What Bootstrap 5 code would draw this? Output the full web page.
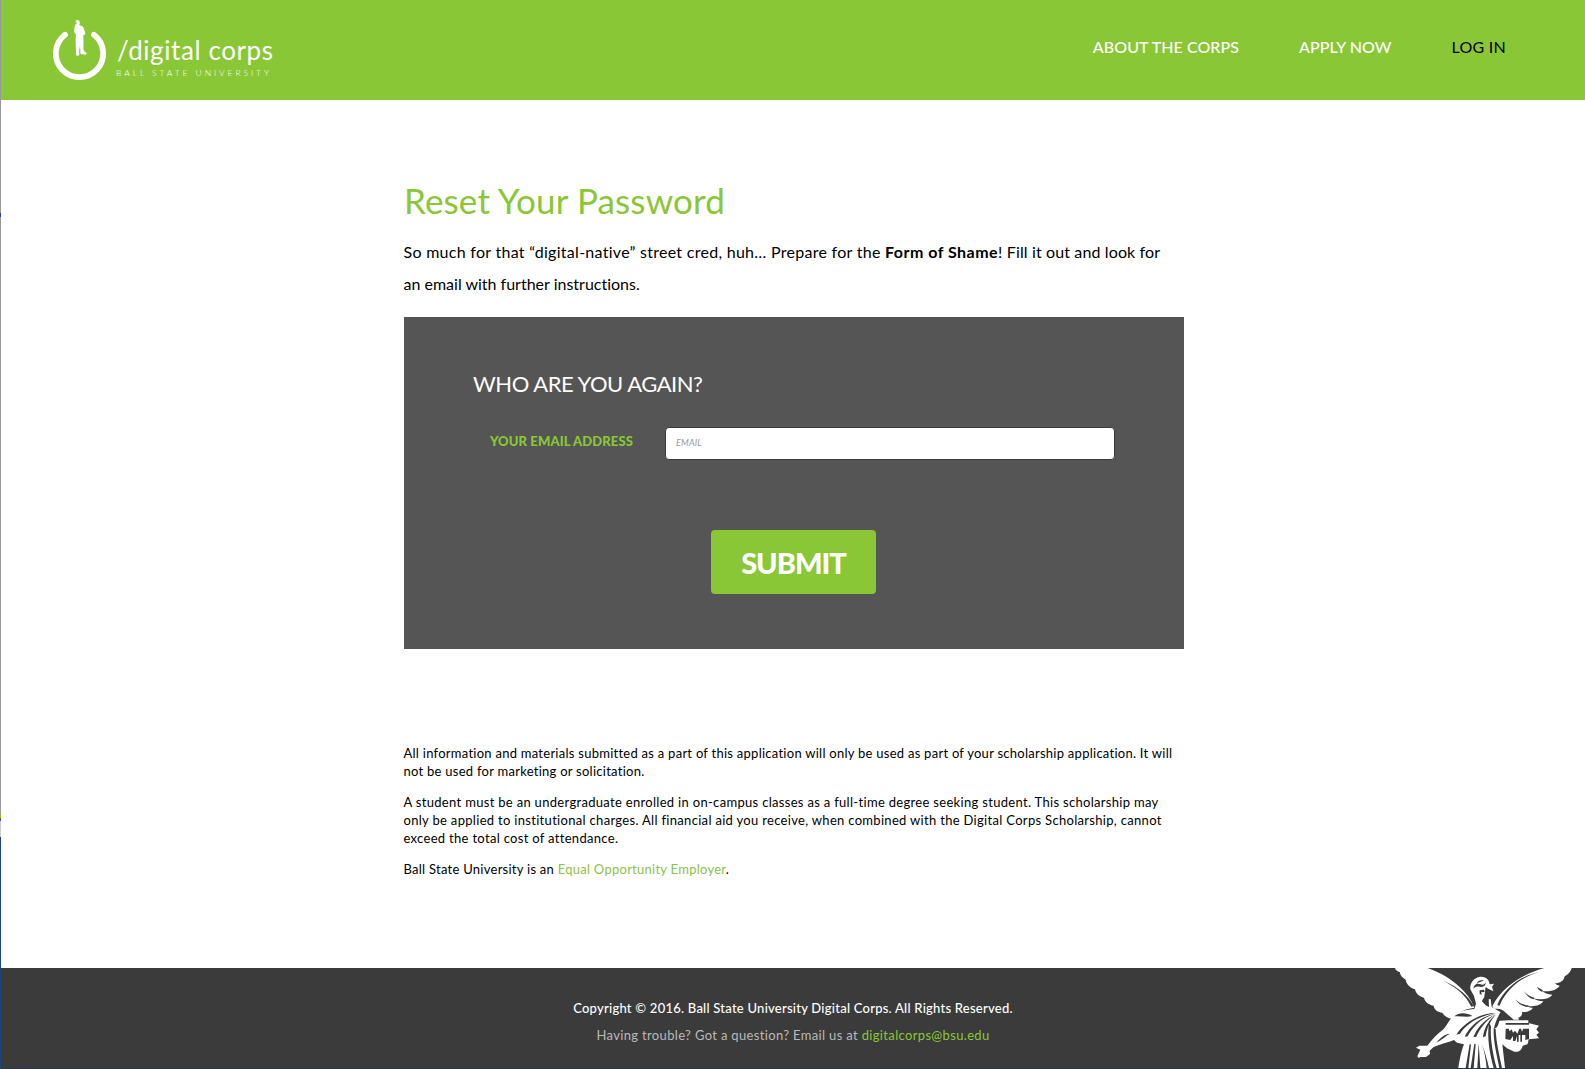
<!DOCTYPE html>
<html lang="en">
<head>
<meta charset="utf-8">
<meta name="viewport" content="width=device-width, initial-scale=1">
<title>Reset Your Password | Digital Corps</title>
<link href="https://cdn.jsdelivr.net/npm/bootstrap@5.3.0/dist/css/bootstrap.min.css" rel="stylesheet">
<style>
:root{--dc-green:#89c736}
body{font-family:Lato,"Open Sans",sans-serif;color:#000;background:#fff;font-variant-ligatures:none;min-height:1069px;overflow:hidden}
a{text-decoration:none}
.page-frame{display:grid;grid-template-columns:1px 1fr;height:1069px}
.edge-strip{background:linear-gradient(#999 0 213px,#234a80 213px 217px,#999 217px 815px,#c9a800 815px 818px,#345f95 818px 821px,#ccc 821px 837px,#1d447d 837px)}
.page-body{border-bottom:1px solid #24345a}
.site-header{background:var(--dc-green);height:100px;padding:0 79px 0 48px}
.site-nav{gap:60px;padding-top:35px;font-size:16px;line-height:24px;font-weight:500;letter-spacing:.06px}
.site-nav a{color:#fff;white-space:nowrap}
.site-nav a.login-link{color:#000;font-weight:400;letter-spacing:.25px}
.content-col{width:781px;margin-left:402px;padding:80px 0 0 1px}
.page-title{font-size:35px;line-height:40px;letter-spacing:.15px;color:var(--dc-green);margin:0 0 16px;font-weight:400}
.intro{font-size:16px;line-height:32px;white-space:nowrap;margin:0 0 17px -.5px}
.ls-a{letter-spacing:.28px}.ls-b{letter-spacing:.48px}.ls-c{letter-spacing:.13px}
.form-panel{background:#555;height:332px;padding:53px 69px 0}
.form-panel h2{font-size:22px;line-height:28px;letter-spacing:-.47px;color:#fff;font-weight:400;margin:0 0 29px}
.field-row{padding-left:17px}
.field-row label{width:175px;font-size:13px;line-height:18px;font-weight:900;letter-spacing:.12px;color:var(--dc-green);padding-top:5px}
.field-row .form-control{width:450px;height:33px;min-height:0;border:1px solid #3b3b3b;border-radius:4px;padding:0 10px 2px;font-size:9px;background:#fff}
.field-row .form-control::placeholder{font-style:italic;color:#999;opacity:1;letter-spacing:.15px}
.btn-send{width:165px;height:64px;margin:70px 0 0 238px;background:var(--dc-green);border:0;border-radius:4px;color:#fff;font-size:29px;font-weight:900;letter-spacing:-1px;line-height:64px;padding:1px 0 0}
.legal{font-size:13px;line-height:18px;letter-spacing:.26px;padding-top:95px;margin-left:-.5px;white-space:nowrap}
.legal p{margin-bottom:13px}
.legal .terms{letter-spacing:.31px}
.legal a{color:#8bc34a}
.site-footer{background:#3b3b3b;height:100px;padding-top:27px;font-size:13px;line-height:27px;letter-spacing:.24px;color:#fff}
.site-footer .copy-line{font-weight:500}
.site-footer .help-line{color:#b9b9b9;letter-spacing:.34px}
.site-footer .help-line a{color:var(--dc-green)}
.angel-mark{right:0;bottom:0}
</style>
</head>
<body>
<div class="page-frame">
<div class="edge-strip"></div>
<div class="page-body d-flex flex-column">
<header class="site-header d-flex justify-content-between align-items-start">
  <a href="#" aria-label="Digital Corps">
    <svg width="240" height="100" viewBox="49 0 240 100">
      <path d="M65 34.700A23.700 23.700 0 1 0 94 34.700" fill="none" stroke="#fff" stroke-width="5.800" stroke-linecap="round"/>
      <path d="M76.200 20.400c1.400-.8 3.200-.1 3.500 1.600.1 1.200 0 2.200-.4 3.100 1.400.7 2.800.9 3.700 1.700 1 1.700 1.400 3.800 2.100 5.800.4 1.200.1 1.700-.7 2.200l-1.100.6c.1 3.500.4 7.200.2 10.700-.2 1.500-.2 3 .3 4.500.9 1.300 2.400 1.800 2.900 2.700.1.900-.4 1.300-1.100 1.400-1.700.1-3.800-.2-5.100-.9-.3-1.500-.1-4.500-.5-7.500-.3 1.600-.7 2.500-.9 5.100.1 1.500.3 2.700.1 3.600-.3.900-2.800 1-3.300 0-.2-1 .1-2.200.1-3.300l-.4-10.600c0-2.300.1-4.700.3-6.900-1.500-1-1.800-2.300-1.700-3.700.2-2 .3-4.400 1-5.700.4-.6 1.200-.9 1.800-1.300-1.200-1.600-1.900-2.400-.8-3.100z" fill="#fff"/>
      <text x="117" y="60" font-size="26" fill="#fff" textLength="156" lengthAdjust="spacing">/digital corps</text>
      <text x="116" y="76" font-size="8.500" font-weight="300" fill="#fff" textLength="153">BALL STATE UNIVERSITY</text>
    </svg>
  </a>
  <nav class="site-nav d-flex">
    <a href="#">ABOUT THE CORPS</a>
    <a href="#">APPLY NOW</a>
    <a href="#" class="login-link">LOG IN</a>
  </nav>
</header>

<main class="content-col flex-grow-1">
  <h1 class="page-title">Reset Your Password</h1>
  <p class="intro"><span class="ls-a">So much for that “digital-native” street cred, huh… Prepare for the </span><strong class="ls-b">Form of Shame</strong><span class="ls-c">! Fill it out and look for</span><br>an email with further instructions.</p>
  <form class="form-panel">
    <h2>WHO ARE YOU AGAIN?</h2>
    <div class="field-row d-flex">
      <label for="email">YOUR EMAIL ADDRESS</label>
      <input id="email" type="email" class="form-control" placeholder="EMAIL">
    </div>
    <button type="button" class="btn btn-send d-block">SUBMIT</button>
  </form>
  <section class="legal">
    <p>All information and materials submitted as a part of this application will only be used as part of your scholarship application. It will<br>not be used for marketing or solicitation.</p>
    <p class="terms">A student must be an undergraduate enrolled in on-campus classes as a full-time degree seeking student. This scholarship may<br>only be applied to institutional charges. All financial aid you receive, when combined with the Digital Corps Scholarship, cannot<br>exceed the total cost of attendance.</p>
    <p>Ball State University is an <a href="#">Equal Opportunity Employer</a>.</p>
  </section>
</main>

<footer class="site-footer position-relative text-center">
  <div class="copy-line">Copyright © 2016. Ball State University Digital Corps. All Rights Reserved.</div>
  <div class="help-line">Having trouble? Got a question? Email us at <a href="#">digitalcorps@bsu.edu</a></div>
  <svg class="angel-mark position-absolute" width="200" height="100" viewBox="0 39 600 300">
    <g fill="#fff">
      <path d="M30 39H128C165 52 198 72 224 96C243 113 258 133 268 158C252 160 238 164 228 171L207 193C192 191 176 183 172 173C160 172 147 164 146 152C133 150 119 141 117 128C104 126 92 116 90 103C76 99 64 88 62 74C52 68 44 60 45 52C37 49 31 45 30 39Z"/>
      <path d="M560 39H478C438 50 398 70 370 94C348 113 332 133 322 154L327 162C342 159 354 164 362 173L386 194H402L400 188C408 186 413 180 411 171C426 172 440 167 443 158C436 158 430 156 426 152C446 157 468 151 475 139C464 139 452 136 445 130C466 136 494 132 502 119C489 118 478 114 470 108C492 112 517 105 524 92C517 91 512 88 510 85C525 84 538 76 538 65C548 59 558 50 560 39Z"/>
      <path d="M256 103C254 85 265 70 283 66C299 63 313 73 314 88L327 86L321 96L325 109L311 102L302 96L298 125C297 131 291 133 291 139L302 151L312 156L311 133L317 132L320 156L346 171C345 186 333 198 331 215L344 196H430V204L462 212L454 223L462 233L454 239L462 250L431 253C429 258 431 263 427 268L413 272C411 285 401 292 388 290L366 280L352 268L360 339H220C224 312 230 285 237 268L216 263L207 255C190 262 166 267 146 276L134 287L135 297L123 306H106L102 309L97 304L106 284L93 278L103 272H127C140 255 158 235 176 222C188 208 193 193 205 184C218 169 246 164 268 162L273 146L267 123Z"/>
    </g>
    <g fill="#3b3b3b">
      <path d="M176 78C218 95 250 122 266 153L259 155C242 120 213 97 176 78Z"/>
      <path d="M462 51C412 66 367 97 343 153L337 149C358 99 406 63 462 51Z"/>
      <path d="M456 96L474 106L470 110C463 107 459 102 456 96ZM417 108C425 119 435 125 448 128L446 133C433 130 423 120 417 108ZM391 133C403 146 416 150 431 151L427 156C412 154 399 147 391 133Z"/>
      <path d="M265 101C267 87 277 84 287 88C294 91 300 87 303 82C302 94 293 98 284 95C276 93 270 95 265 101ZM275 86C280 74 289 75 297 77C289 80 282 80 275 86ZM284 106L297 104L299 111L288 112L291 119L284 117Z"/>
      <path d="M332 174C290 174 239 199 214 239L225 236C249 201 288 182 332 174Z"/>
      <path d="M331 176C288 184 256 211 239 245L248 244C265 212 291 188 331 176Z"/>
      <path d="M331 178C300 193 276 218 265 247L274 245C285 219 304 196 331 178Z"/>
      <path d="M333 178C310 196 297 220 294 247L302 244C306 217 316 198 333 178Z"/>
      <path d="M254 267L242 339H250L258 269ZM268 266L257 339H266L272 268ZM281 264L277 339H286Z"/>
      <path d="M312 203C305 249 315 299 326 339H335C322 293 315 244 318 214ZM326 218C324 259 336 301 343 339H351C343 300 333 260 332 222Z"/>
      <path d="M208 184C222 171 246 173 262 183C244 188 227 182 208 184Z"/>
      <path d="M155 263C165 247 181 237 195 236C181 243 170 255 155 263Z"/>
      <path d="M362 204H432V209H362ZM362 221H371L374 229L380 223L384 233L390 227L397 236L403 221H408L411 230L415 221H432V252L421 255V240H411V260H406V240L401 240V260H396V244L391 258H384V243L376 255L361 252Z"/>
      <path d="M345 174C337 189 331 202 327 219C335 221 340 212 343 197L382 194C370 187 360 175 345 174Z"/>
      <path d="M290 266C298 287 303 314 305 339H312C306 313 299 287 290 266Z"/>
    </g>
  </svg>
</footer>
</div>
</div>
<script src="https://cdn.jsdelivr.net/npm/bootstrap@5.3.0/dist/js/bootstrap.bundle.min.js"></script>
</body>
</html>
